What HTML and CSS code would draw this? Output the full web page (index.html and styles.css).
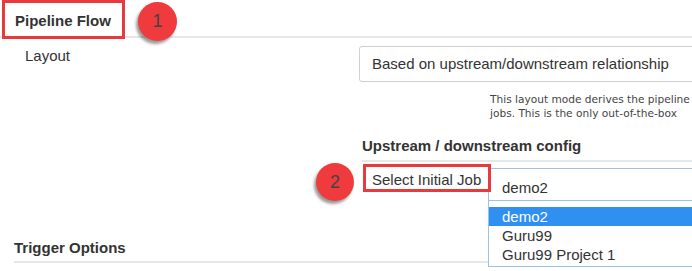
FILE: index.html
```html
<!doctype html>
<html>
  <head>
    <title>Pipeline Flow</title>
    <meta name="viewport" content="width=device-width">
    <link rel="stylesheet" href="styles.css">
  </head>
  <body>
    <div class="page">
      <div class="section-head">
        <h2 class="title marked">Pipeline Flow</h2>
        <span class="badge badge-one">1</span>
      </div>
      <div class="field-row">
        <div class="field-label">Layout</div>
        <div class="select">Based on upstream/downstream relationship</div>
      </div>
      <div class="help">
        <p>This layout mode derives the pipeline</p>
        <p>jobs. This is the only out-of-the-box</p>
      </div>
      <div class="sub-head">Upstream / downstream config</div>
      <div class="job-row">
        <span class="badge badge-two">2</span>
        <span class="job-label marked">Select Initial Job</span>
        <div class="combo">
          <div class="combo-input">demo2</div>
          <ul class="combo-menu">
            <li class="active">demo2</li>
            <li>Guru99</li>
            <li>Guru99 Project 1</li>
          </ul>
        </div>
      </div>
      <div class="section-head trigger">
        <h2 class="title">Trigger Options</h2>
      </div>
    </div>
  </body>
</html>
```

FILE: styles.css
```css
body {
  margin: 0;
  font-family: "Liberation Sans", Arial, sans-serif;
  color: #333;
  background: #fff;
}
.page {
  width: 692px;
  height: 271px;
  overflow: hidden;
}
.section-head {
  display: flex;
  align-items: flex-start;
  height: 36px;
  border-bottom: 2px solid #e6e8e8;
}
.title {
  margin: 0;
  font-size: 15px;
  line-height: 17px;
  font-weight: bold;
}
.marked {
  border: 3px solid #e8393d;
  background: #fff;
  position: relative;
  z-index: 1;
}
.section-head .marked {
  box-sizing: border-box;
  margin-left: 2px;
  width: 123px;
  height: 39px;
  padding: 9px 0 0 10px;
}
.badge {
  display: flex;
  align-items: center;
  justify-content: center;
  flex: none;
  width: 39px;
  height: 39px;
  border-radius: 50%;
  background: #ef3a3e;
  color: #474242;
  font-size: 18px;
  box-shadow: -2px 3px 3px rgba(0, 0, 0, 0.4);
}
.badge-one {
  margin: 2px 0 0 13px;
}
.field-row {
  display: grid;
  grid-template-columns: 359px 360px;
  margin-top: 8px;
}
.field-label {
  padding: 1px 0 0 25px;
  font-size: 15px;
  line-height: 17px;
}
.select {
  box-sizing: border-box;
  height: 36px;
  border: 1px solid #cfcfcf;
  border-radius: 3px;
  padding-left: 12px;
  font-size: 15px;
  line-height: 34px;
  white-space: nowrap;
}
.help {
  margin: 10px 0 0 490px;
  font-family: "DejaVu Sans", Verdana, sans-serif;
  font-size: 10.6px;
  line-height: 14px;
  color: #444;
  white-space: nowrap;
}
.help p {
  margin: 0;
}
.sub-head {
  margin: 17px 0 0 362px;
  padding-bottom: 6px;
  border-bottom: 2px solid #e6e8e8;
  font-size: 15px;
  line-height: 17px;
  font-weight: bold;
}
.job-row {
  display: flex;
  align-items: flex-start;
  margin-left: 316px;
}
.badge-two {
  width: 38px;
  height: 38px;
  margin-top: 1px;
}
.job-label {
  box-sizing: border-box;
  flex: none;
  width: 128px;
  height: 28px;
  margin: 2px 0 0 9px;
  padding: 4px 0 0 6px;
  font-size: 15px;
  line-height: 17px;
  white-space: nowrap;
}
.combo {
  position: relative;
  flex: none;
  width: 230px;
  margin: 6px 0 0 -3px;
}
.combo-input {
  box-sizing: border-box;
  height: 33px;
  border: 1px solid #9cc2e8;
  padding: 10px 0 0 13px;
  font-size: 15px;
  line-height: 17px;
}
.combo-menu {
  position: absolute;
  top: 100%;
  left: 0;
  right: 0;
  margin: 0;
  padding: 6px 0 2px;
  list-style: none;
  background: #fff;
  border: 1px solid #9cc2e8;
  border-top: none;
  z-index: 2;
}
.combo-menu li {
  padding-left: 13px;
  font-size: 15px;
  line-height: 19px;
}
.combo-menu .active {
  background: #3090f2;
  color: #fff;
}
.trigger {
  height: auto;
  margin: 38px 0 0 14px;
  padding-bottom: 5px;
}
```
